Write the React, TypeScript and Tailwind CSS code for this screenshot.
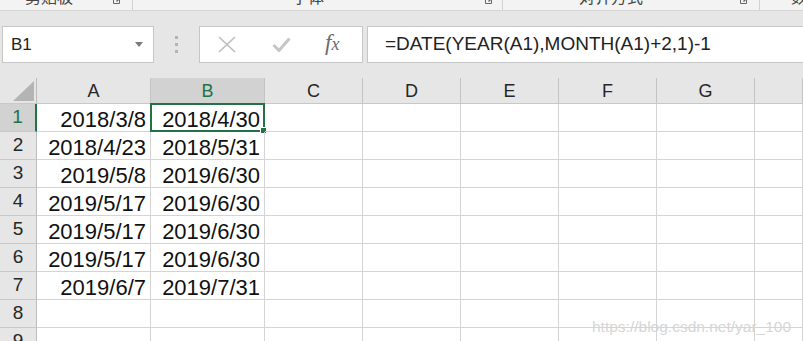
import React from "react";

const COLS = ["A", "B", "C", "D", "E", "F", "G", ""];
const WIDTHS = ["w-[114px]", "w-[114px]", "w-[98px]", "w-[98px]", "w-[98px]", "w-[98px]", "w-[98px]", "flex-1"];

const DATA: [string, string][] = [
  ["2018/3/8", "2018/4/30"],
  ["2018/4/23", "2018/5/31"],
  ["2019/5/8", "2019/6/30"],
  ["2019/5/17", "2019/6/30"],
  ["2019/5/17", "2019/6/30"],
  ["2019/5/17", "2019/6/30"],
  ["2019/6/7", "2019/7/31"],
  ["", ""],
  ["", ""],
];

function Launcher() {
  return (
    <svg width="7" height="8" viewBox="0 0 7 8" className="mt-[-4px] text-[#666]">
      <path d="M0.5 0.5V7.5H6.5V0.5" fill="none" stroke="currentColor" strokeWidth="1" />
      <path d="M2 2L5 5M5 3V5H3" fill="none" stroke="currentColor" strokeWidth="1" />
    </svg>
  );
}

function RibbonGroup({ label, width, labelLeft, launcherRight }: { label: string; width: string; labelLeft: string; launcherRight: string }) {
  return (
    <div className={`${width} h-full flex items-start border-r border-[#d2d2d2] shrink-0`}>
      <span className={`${labelLeft} mt-[-12px] text-[16px] leading-[16px] text-[#444] font-['Noto_Sans_CJK_SC',sans-serif]`}>
        {label}
      </span>
      <span className={`ml-auto ${launcherRight}`}>
        <Launcher />
      </span>
    </div>
  );
}

export default function App() {
  return (
    <div className="w-[803px] h-[341px] overflow-hidden bg-white relative font-['Liberation_Sans',Arial,sans-serif]">
      {/* ribbon bottom edge */}
      <div className="h-[11px] bg-[#f3f3f3] border-b border-[#d5d5d5] flex overflow-hidden">
        <RibbonGroup label="剪贴板" width="w-[133px]" labelLeft="ml-[25px]" launcherRight="mr-[12px]" />
        <RibbonGroup label="字体" width="w-[370px]" labelLeft="ml-[159px]" launcherRight="mr-[10px]" />
        <RibbonGroup label="对齐方式" width="w-[257px]" labelLeft="ml-[76px]" launcherRight="mr-[12px]" />
        <span className="ml-[31px] mt-[-12px] text-[16px] leading-[16px] text-[#444] font-['Noto_Sans_CJK_SC',sans-serif]">
          数
        </span>
      </div>

      {/* formula bar */}
      <div className="h-[67px] bg-[#e6e6e6] flex items-start pt-[15px]">
        <div className="ml-[2px] w-[152px] h-[37px] bg-white border border-[#c6c6c6] flex items-center pl-[8px] pr-[10px]">
          <span className="text-[17px] text-[#222]">B1</span>
          <svg width="8" height="5" viewBox="0 0 8 5" className="ml-auto">
            <path d="M0 0H8L4 5Z" fill="#7a7a7a" />
          </svg>
        </div>
        <div className="w-[45px] h-[37px] flex flex-col items-center justify-center gap-[4px]">
          <span className="w-[3px] h-[3px] bg-[#b4b4b4]" />
          <span className="w-[3px] h-[3px] bg-[#b4b4b4]" />
          <span className="w-[3px] h-[3px] bg-[#b4b4b4]" />
        </div>
        <div className="w-[164px] h-[37px] bg-white border border-[#c6c6c6] flex items-center">
          <svg width="18" height="17" viewBox="0 0 18 17" className="ml-[18px]">
            <path d="M1 1L17 16M17 1L1 16" stroke="#bdbdbd" strokeWidth="1.6" fill="none" />
          </svg>
          <svg width="19" height="15" viewBox="0 0 19 15" className="ml-[36px]">
            <path d="M1.5 8L7 13.5L17.5 1.5" stroke="#c6c6c6" strokeWidth="3" fill="none" />
          </svg>
          <span className="ml-[34px] text-[23px] leading-none text-[#6b6b6b] italic font-['Liberation_Serif',serif] mt-[-4px]">
            f<span className="text-[18px]">x</span>
          </span>
        </div>
        <div className="ml-[4px] flex-1 h-[37px] bg-white border-y border-l border-[#c6c6c6] flex items-center pl-[17px]">
          <span className="text-[19px] text-[#222]">=DATE(YEAR(A1),MONTH(A1)+2,1)-1</span>
        </div>
      </div>

      {/* sheet */}
      <div className="flex flex-col">
        <div className="flex h-[26px] bg-[#e6e6e6] border-b border-[#c8c8c8]">
          <div className="w-[37px] shrink-0 border-r border-[#bcbcbc] flex items-end justify-end pr-[2px] pb-[2px]">
            <svg width="21" height="20" viewBox="0 0 21 20">
              <path d="M21 0V20H0Z" fill="#b4b4b4" />
            </svg>
          </div>
          {COLS.map((c, i) => (
            <div
              key={i}
              className={`${WIDTHS[i]} shrink-0 border-r border-[#c4c4c4] flex items-center justify-center text-[18px] pt-[2px] ${
                c === "B" ? "bg-[#d2d2d2] text-[#217346]" : "text-[#262626]"
              }`}
            >
              {c}
            </div>
          ))}
        </div>

        {DATA.map((row, r) => (
          <div key={r} className="flex h-[28px]">
            <div
              className={`w-[37px] shrink-0 border-b border-[#c8c8c8] flex items-center justify-center text-[19px] ${
                r === 0
                  ? "bg-[#d2d2d2] text-[#217346] border-r-2 border-r-[#217346]"
                  : "bg-[#e6e6e6] text-[#262626] border-r border-r-[#bcbcbc]"
              }`}
            >
              {r + 1}
            </div>
            {COLS.map((_, i) => (
              <div
                key={i}
                className={`${WIDTHS[i]} shrink-0 border-r border-b border-[#d4d4d4] relative text-right pr-[4px] pt-[4px] leading-[24px] text-[22px] text-[#111]`}
              >
                {i < 2 ? row[i] : ""}
                {r === 0 && i === 1 && (
                  <>
                    <div className="absolute left-[-1px] top-[-1px] right-[-1px] bottom-[-1px] border-2 border-[#217346]" />
                    <div className="absolute right-[-3px] bottom-[-3px] w-[7px] h-[7px] bg-[#217346] border border-white" />
                  </>
                )}
              </div>
            ))}
          </div>
        ))}
      </div>

      <span className="absolute left-[592px] top-[315px] text-[15.5px] text-[#d6d6d6]">
        https://blog.csdn.net/yar_100
      </span>
    </div>
  );
}
